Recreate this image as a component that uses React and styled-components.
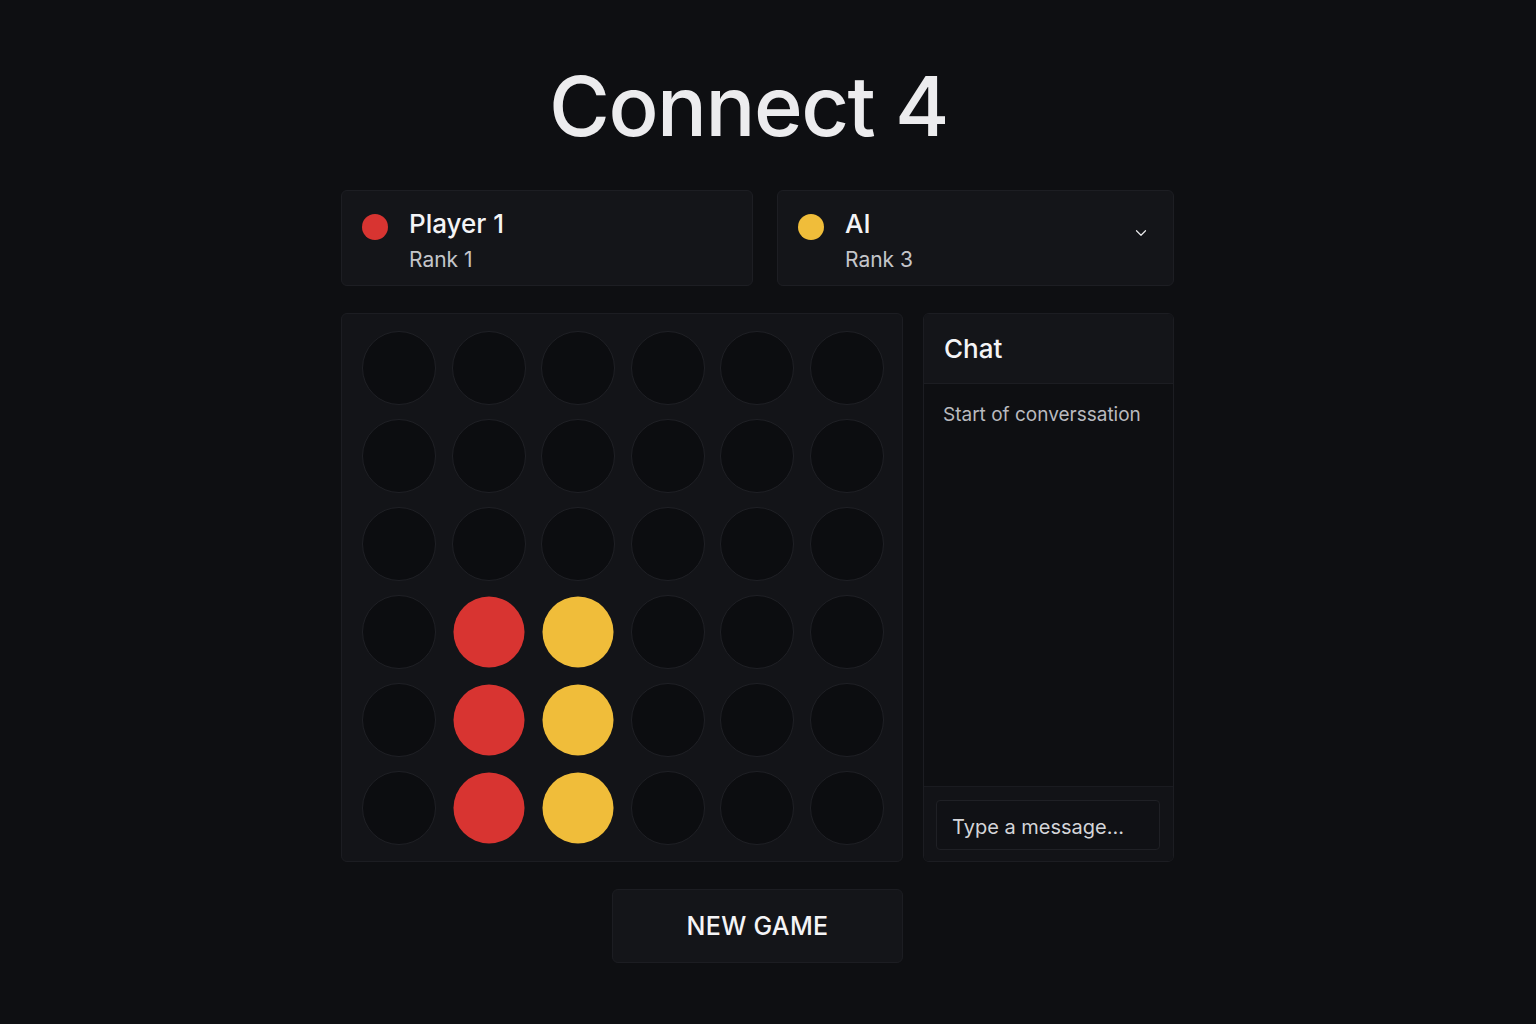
import React from "react"
import styled, { createGlobalStyle } from "styled-components"
import { ChevronDown } from "lucide-react"

const GlobalStyle = createGlobalStyle`
  html, body {
    margin: 0;
    padding: 0;
    background: #0e0f12;
    font-family: "Inter", "Noto Sans", sans-serif;
    color: #f2f2f4;
  }
  * { box-sizing: border-box; }
`

// 0 empty, 1 red, 2 yellow
const board = [
  [0, 0, 0, 0, 0, 0],
  [0, 0, 0, 0, 0, 0],
  [0, 0, 0, 0, 0, 0],
  [0, 1, 2, 0, 0, 0],
  [0, 1, 2, 0, 0, 0],
  [0, 1, 2, 0, 0, 0],
]

function App() {
  return <Page>
    <GlobalStyle/>
    <Main>
      <Title>Connect 4</Title>
      <Players>
        <PlayerCard>
          <Dot color="#d83431"/>
          <PlayerInfo>
            <PlayerName>Player 1</PlayerName>
            <Rank>Rank 1</Rank>
          </PlayerInfo>
        </PlayerCard>
        <PlayerCard $narrow>
          <Dot color="#f0bd3a"/>
          <PlayerInfo>
            <PlayerName>AI</PlayerName>
            <Rank>Rank 3</Rank>
          </PlayerInfo>
          <Chevron>
            <ChevronDown size={18} strokeWidth={1.6}/>
          </Chevron>
        </PlayerCard>
      </Players>
      <GameRow>
        <Board>
          {board.flat().map((cell, i) => <Hole key={i} $cell={cell}/>)}
        </Board>
        <Chat>
          <ChatHeader>Chat</ChatHeader>
          <ChatBody>Start of converssation</ChatBody>
          <ChatFooter>
            <ChatInput placeholder="Type a message..."/>
          </ChatFooter>
        </Chat>
      </GameRow>
      <NewGame>NEW GAME</NewGame>
    </Main>
  </Page>
}

export default App

const Page = styled.div`
  min-height: 1024px;
  display: flex;
  justify-content: center;
  padding: 62px 21px 0 0;
`
const Main = styled.div`
  width: 833px;
  display: flex;
  flex-direction: column;
  align-items: center;
`
const Title = styled.h1`
  margin: 0;
  font-size: 83px;
  font-weight: 500;
  letter-spacing: -1.5px;
  line-height: 88px;
  color: #ececee;
  margin-left: -18px;
`
const Players = styled.div`
  margin-top: 40px;
  width: 100%;
  display: flex;
  gap: 24px;
`
const PlayerCard = styled.div`
  flex: ${p => p.$narrow ? "0 0 397px" : "0 0 412px"};
  height: 96px;
  display: flex;
  align-items: flex-start;
  gap: 21px;
  padding: 17px 20px 0;
  background: #141519;
  border: 1px solid #1d1e23;
  border-radius: 6px;
`
const Dot = styled.span`
  width: 26px;
  height: 26px;
  margin-top: 6px;
  border-radius: 50%;
  background: ${p => p.color};
  flex-shrink: 0;
`
const PlayerInfo = styled.div`
  flex: 1;
  display: flex;
  flex-direction: column;
  gap: 7px;
`
const PlayerName = styled.div`
  font-size: 26px;
  font-weight: 500;
  line-height: 32px;
  color: #f4f4f6;
`
const Rank = styled.div`
  font-size: 21px;
  line-height: 26px;
  color: #c4c5ca;
`
const Chevron = styled.div`
  display: flex;
  color: #e8e8ea;
  margin: 16px 3px 0 0;
`
const GameRow = styled.div`
  margin-top: 27px;
  width: 100%;
  display: flex;
  gap: 20px;
`
const Board = styled.div`
  width: 562px;
  height: 549px;
  padding: 17px 20px;
  display: grid;
  grid-template-columns: repeat(6, 74px);
  grid-auto-rows: 74px;
  column-gap: 15.6px;
  row-gap: 14px;
  background: #131418;
  border: 1px solid #1c1d22;
  border-radius: 6px;
`
const Hole = styled.div`
  border-radius: 50%;
  background: ${p => p.$cell === 1 ? "#d83431" : p.$cell === 2 ? "#f0bd3a" : "#0c0d10"};
  border: ${p => p.$cell === 0 ? "1px solid #1f2025" : "none"};
  transform: ${p => p.$cell === 0 ? "none" : "scale(0.96)"};
`
const Chat = styled.div`
  flex: 1;
  display: flex;
  flex-direction: column;
  background: #0e0f12;
  border: 1px solid #1c1d22;
  border-radius: 6px;
  overflow: hidden;
`
const ChatHeader = styled.div`
  height: 70px;
  padding: 0 20px;
  display: flex;
  align-items: center;
  font-size: 26px;
  font-weight: 500;
  color: #f4f4f6;
  background: #141519;
  border-bottom: 1px solid #1c1d22;
`
const ChatBody = styled.div`
  flex: 1;
  padding: 19px 19px;
  font-size: 19px;
  color: #b9babf;
`
const ChatFooter = styled.div`
  padding: 13px 13px 11px 12px;
  background: #121317;
  border-top: 1px solid #1a1b20;
`
const ChatInput = styled.input`
  width: 100%;
  height: 50px;
  padding: 4px 15px 0;
  background: #101115;
  border: 1px solid #1f2025;
  border-radius: 4px;
  font-family: "Inter", "Noto Sans", sans-serif;
  font-size: 20px;
  color: #e0e0e4;
  outline: none;
  &::placeholder { color: #d4d5d9; }
`
const NewGame = styled.button`
  margin-top: 27px;
  width: 291px;
  height: 74px;
  background: #141519;
  border: 1px solid #1c1d22;
  border-radius: 6px;
  font-family: "Inter", "Noto Sans", sans-serif;
  font-size: 25px;
  font-weight: 500;
  letter-spacing: 0.3px;
  color: #f4f4f6;
`
